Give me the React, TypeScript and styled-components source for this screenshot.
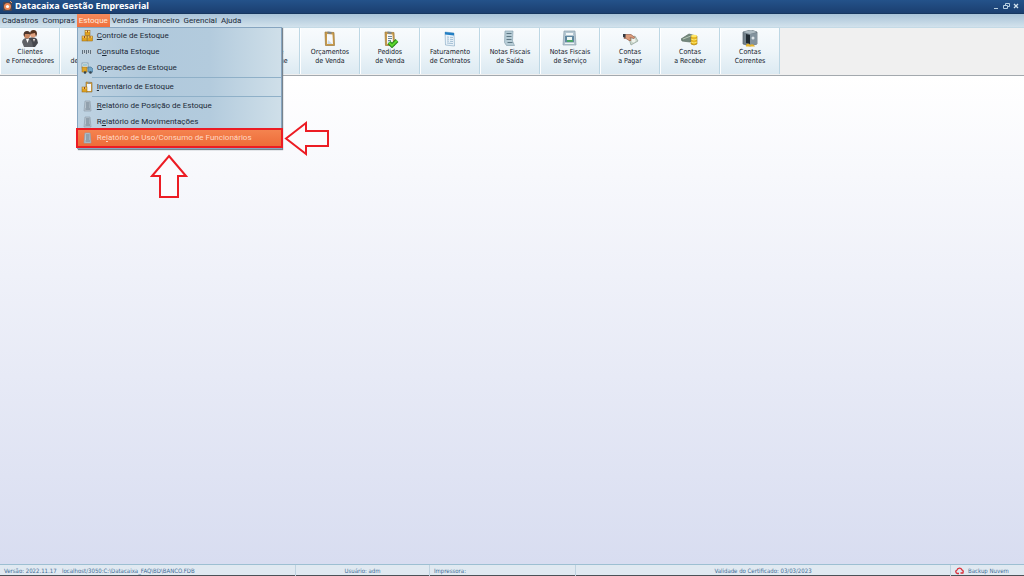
import React from "react";
import styled, { createGlobalStyle } from "styled-components";

const Global = createGlobalStyle`
  * { box-sizing: border-box; }
  html, body { margin: 0; padding: 0; }
  body { font-family: Roboto, "Noto Sans", sans-serif; color: #1c2a38; }
  button { font: inherit; color: inherit; border: 0; margin: 0; padding: 0; background: none; }
`;

const Window = styled.div`
  position: relative;
  display: flex;
  flex-direction: column;
  min-height: 100vh;
  background: linear-gradient(#ffffff 76px, #d7dcf0);
`;

const TitleBar = styled.header`
  display: flex;
  align-items: center;
  gap: 3px;
  height: 14px;
  padding: 0 4px 1px 3px;
  background: linear-gradient(#24528a, #1b3f70);
  border-bottom: 1px solid #16365f;
`;

const Title = styled.h1`
  flex: 1;
  margin: 0;
  font: bold 9px/12px "Noto Sans", sans-serif;
  color: #ffffff;
`;

const WindowButton = styled.button`
  display: flex;
  width: 7px;
  height: 8px;
`;

const MenuBar = styled.nav`
  display: flex;
  height: 13px;
  font-size: 8px;
  line-height: 12px;
  background: linear-gradient(#a9c3d8, #d2e2ec);
`;

const MenuSlot = styled.div`
  position: relative;
`;

const MenuButton = styled.button<{ $active?: boolean }>`
  display: block;
  height: 13px;
  padding: 0 2px;
  white-space: nowrap;
  color: ${(p) => (p.$active ? "#ffe9dd" : "#1c2a38")};
  background: ${(p) => (p.$active ? "linear-gradient(#f58a5c, #f0703c)" : "none")};
`;

const Dropdown = styled.div`
  position: absolute;
  z-index: 2;
  top: 13px;
  left: 0;
  width: 205px;
  padding-bottom: 2px;
  border: 1px solid #86a5c0;
  background: linear-gradient(90deg, #bfd3e2, #b0c9dc 35%, #b3cbdd 65%, #cfdfe9);
  box-shadow: 1px 1px 1px #77838d;
`;

const Entry = styled.button<{ $selected?: boolean }>`
  display: flex;
  align-items: center;
  gap: 4px;
  width: 100%;
  height: 16px;
  padding-left: 3px;
  white-space: nowrap;
  text-align: left;
  color: ${(p) => (p.$selected ? "#ffd9c4" : "#1c2a38")};
  background: ${(p) => (p.$selected ? "linear-gradient(#f4834f, #ee6c39)" : "none")};
`;

const Highlight = styled.div`
  margin: -2px;
  border: 2px solid #ec1c24;
`;

const Divider = styled.hr`
  height: 1px;
  margin: 1px 0 1px 14px;
  border: 0;
  background: #8fb0c8;
`;

const Toolbar = styled.div`
  display: flex;
  height: 49px;
  background: #f0f0f0;
  border-top: 1px solid #c4dae6;
  border-bottom: 1px solid #a3a9ae;
`;

const Tool = styled.button`
  display: flex;
  flex-direction: column;
  align-items: center;
  flex: 0 0 60px;
  height: 46px;
  padding-top: 2px;
  border-right: 1px solid #bdd7e4;
  border-left: 1px solid #ffffff;
  background: linear-gradient(#f8fbfd, #eef5f9 50%, #dceaf2);
  font: 7px/9px "DejaVu Sans Condensed", "DejaVu Sans", sans-serif;
  white-space: pre;
  text-align: center;
  color: #14202b;
`;

const ToolLabel = styled.span`
  display: block;
`;

const Workspace = styled.main`
  flex: 1;
`;

const StatusBar = styled.footer`
  display: grid;
  grid-template-columns: 62px 234px 134px 146px 1fr 73px;
  height: 12px;
  border-top: 1px solid #9dbfd2;
  border-bottom: 1px solid #4b5157;
  background: #e0e9f1;
  font: 6px/11px "DejaVu Sans Condensed", "DejaVu Sans", sans-serif;
  color: #3f6c96;
`;

const StatusCell = styled.div<{ $center?: boolean; $plain?: boolean }>`
  display: flex;
  align-items: center;
  gap: 4px;
  justify-content: ${(p) => (p.$center ? "center" : "flex-start")};
  padding-left: ${(p) => (p.$plain ? 0 : 4)}px;
  border-right: 1px solid #bfd3e0;
  white-space: nowrap;
  &:first-child, &:last-child { border-right: 0; }
`;

const Pointer = styled.svg<{ $x: number; $y: number }>`
  position: absolute;
  z-index: 3;
  left: ${(p) => p.$x}px;
  top: ${(p) => p.$y}px;
  fill: #fbfbfe;
  stroke: #ec1c24;
  stroke-width: 2;
`;

const Box = ({ x, y }: { x: number; y: number }) => (
  <g>
    <rect x={x} y={y} width="5" height="5" fill="#dfa21f" stroke="#946615" strokeWidth=".5" />
    <path d={`M${x + 0.5} ${y + 1}h4`} stroke="#ffe080" />
    <path d={`M${x + 2} ${y}h1v2h-1z`} fill="#a2491b" />
  </g>
);

const Clipboard = () => (
  <g>
    <path d="M4 2l9 .5.500 13H4.500z" fill="#c99a48" stroke="#9c7a3c" strokeWidth=".7" />
    <path d="M6 4l5.500.5.500 9.500H6z" fill="#f7f9fb" />
    <path d="M6.500 1.500l4 .5v2l-4-.5z" fill="#798590" />
    <path d="M7 10l4.500 4H6.500z" fill="#cbdbe7" />
  </g>
);

const Paper = () => (
  <g>
    <path d="M4 1h8l-.5 10 2 4.500H5.500l-2-3z" fill="#b6ccd6" stroke="#8ba5b1" strokeWidth=".7" />
    <path d="M5.500 3.500h5M5.500 6.500h5M5.500 9.500h5M6.500 12.500h5" stroke="#5c7683" strokeWidth="1" />
  </g>
);

const toolArt: Record<string, React.ReactNode> = {
  people: (
    <g>
      <path d="M8 8q5-2 8 1l1 4-3 4H8z" fill="#46484d" />
      <circle cx="12" cy="4.500" r="3" fill="#dfa17e" />
      <path d="M9 4q0-4 3.500-4T16 4l-1 3-1-4z" fill="#54331f" />
      <path d="M1 12q1-4 4.500-4t5.500 4l1 5H3z" fill="#5f6267" />
      <circle cx="6" cy="5.500" r="3" fill="#c98762" />
      <path d="M2.500 5q0-4 3.500-4t3.500 4L8 4H4L3.500 7z" fill="#4a352c" />
      <path d="M5 9l1.500 4L8 9z" fill="#fff" />
      <path d="M12 9l1 3 1-3z" fill="#f5e9e4" />
    </g>
  ),
  clipboard: <Clipboard />,
  order: (
    <g>
      <Clipboard />
      <path d="M7 6.500h4M7 8.500h4M7 10.500h3" stroke="#70899b" />
      <path d="M8 12.500l3 3 5-5" fill="none" stroke="#23801c" strokeWidth="4" />
      <path d="M8 12.500l3 3 5-5" fill="none" stroke="#5bd82e" strokeWidth="2" />
    </g>
  ),
  contract: (
    <g>
      <path d="M4 2l9 1 .5 13-9-1z" fill="#e9f2f9" stroke="#8fb0c8" strokeWidth=".7" />
      <path d="M4 2l9 1v2.500L4 4.500z" fill="#237fc4" />
      <path d="M6 7l2 .2M9 7.300l3 .2M6 9l2 .2M9 9.300l3 .2M6 11l2 .2M9 11.300l3 .2M6 13l6 .6" stroke="#a3bfd4" />
    </g>
  ),
  paper: <Paper />,
  service: (
    <g>
      <path d="M3 1h11l1 14H2z" fill="#b4c6d1" stroke="#8da0ad" strokeWidth=".7" />
      <path d="M5 3h7v2H5z" fill="#f3f7f8" />
      <rect x="4" y="6" width="9" height="6" fill="#5f869f" />
      <rect x="6" y="7" width="5" height="3" fill="#eef6f2" />
      <path d="M6 10h6v2H6z" fill="#4ca768" />
      <path d="M4 13.500h9" stroke="#eef3f5" />
    </g>
  ),
  pay: (
    <g>
      <path d="M8 9l6-3 3 5-7 4z" fill="#c9d6cb" stroke="#8fa196" strokeWidth=".7" />
      <circle cx="12.500" cy="10.500" r="2" fill="#eff3ec" />
      <path d="M4 4.500h6l4 3-1 1-4-1 1 3-2 0-3-2-2 0z" fill="#dc9b79" stroke="#8d5541" strokeWidth=".6" />
      <path d="M2 4l2.500 0 0 4-2.500-1z" fill="#343b43" />
    </g>
  ),
  receive: (
    <g>
      <path d="M0 9l8-5 7 2-6 6-8-1z" fill="#73887d" stroke="#5c6f63" strokeWidth=".7" />
      <path d="M2 9l8-3" stroke="#b5c6b5" />
      <path d="M10 6h6v8q-3 2-6 0z" fill="#e7b823" stroke="#9f750f" strokeWidth=".6" />
      <ellipse cx="13" cy="6" rx="3" ry="1.300" fill="#ffe768" />
      <path d="M10 9q3 2 6 0M10 12q3 2 6 0" fill="none" stroke="#fff080" strokeWidth=".8" />
    </g>
  ),
  safe: (
    <g>
      <path d="M2 2l8-2 6 2v12l-7 2-7-2z" fill="#73818b" stroke="#56636d" strokeWidth=".7" />
      <path d="M2 2l8-2 6 2-7 2z" fill="#aebbc2" />
      <path d="M5 4l4 1v9l-4-1z" fill="#202a32" />
      <path d="M9 4l7-1v11l-7 2z" fill="#82929d" />
      <circle cx="12" cy="8" r="1.500" fill="#dbe3e7" />
      <path d="M5 15q2-3 4 0 3-2 5 1.500H5z" fill="#e8b52b" />
    </g>
  ),
};

const menuArt: Record<string, React.ReactNode> = {
  boxes: <g><Box x={4} y={0.5} /><Box x={1} y={6} /><Box x={6.500} y={6} /></g>,
  barcode: (
    <g>
      <rect x="1" y="4" width="10" height="4" fill="#c3cfd8" />
      <path d="M1.500 4v4M3.500 4v3M5.500 4v4M7.500 4v3M9.500 4v4" stroke="#61707e" />
    </g>
  ),
  truck: (
    <g>
      <rect x="1" y="1" width="6" height="5" fill="#eef3f4" stroke="#6e8d9e" strokeWidth=".7" />
      <path d="M2 3h4" stroke="#53a1b7" />
      <path d="M7 5h3l2 2v3H7z" fill="#72a6c8" stroke="#416f8f" strokeWidth=".6" />
      <rect x="1" y="5" width="5" height="5" fill="#dda62b" stroke="#91671d" strokeWidth=".5" />
      <circle cx="4" cy="10.500" r="1.300" fill="#34434f" /><circle cx="9.500" cy="10.500" r="1.300" fill="#34434f" />
    </g>
  ),
  inventory: (
    <g>
      <path d="M5 1l6 .5v9.500H5z" fill="#d4a13f" stroke="#8c6c34" strokeWidth=".6" />
      <path d="M6 3h4v7H6z" fill="#f3f5f6" /><path d="M7 1h2v2H7z" fill="#8d918f" />
      <Box x={1} y={6} />
    </g>
  ),
  report: (
    <g>
      <path d="M4 1h5l1 10H3z" fill="#b9c5cf" stroke="#8fa1af" strokeWidth=".7" />
      <path d="M5 3h3.500M5 5h3.500M5 7h3.500M4.500 9H9" stroke="#6a7d8b" />
    </g>
  ),
};

type Item = { icon: string; parts: [string, string, string]; selected?: boolean; divided?: boolean };
const entries: Item[] = [
  { icon: "boxes", parts: ["", "C", "ontrole de Estoque"] },
  { icon: "barcode", parts: ["C", "o", "nsulta Estoque"] },
  { icon: "truck", parts: ["O", "p", "erações de Estoque"] },
  { icon: "inventory", parts: ["", "I", "nventário de Estoque"], divided: true },
  { icon: "report", parts: ["", "R", "elatório de Posição de Estoque"], divided: true },
  { icon: "report", parts: ["R", "e", "latório de Movimentações"] },
  { icon: "report", parts: ["Re", "l", "atório de Uso/Consumo de Funcionários"], selected: true },
];

const tools: { icon?: string; label?: string }[] = [
  { icon: "people", label: "Clientes\ne Fornecedores" },
  { icon: "order", label: "\nde Produção" },
  {},
  {},
  { icon: "paper", label: "Controle\nde Estoque" },
  { icon: "clipboard", label: "Orçamentos\nde Venda" },
  { icon: "order", label: "Pedidos\nde Venda" },
  { icon: "contract", label: "Faturamento\nde Contratos" },
  { icon: "paper", label: "Notas Fiscais\nde Saída" },
  { icon: "service", label: "Notas Fiscais\nde Serviço" },
  { icon: "pay", label: "Contas\na Pagar" },
  { icon: "receive", label: "Contas\na Receber" },
  { icon: "safe", label: "Contas\nCorrentes" },
];

const menus = ["Cadastros", "Compras", "Estoque", "Vendas", "Financeiro", "Gerencial", "Ajuda"];

const EntryRow = ({ item }: { item: Item }) => (
  <Entry $selected={item.selected}>
    <svg width="12" height="12" viewBox="0 0 12 12">{menuArt[item.icon]}</svg>
    <span>{item.parts[0]}<u>{item.parts[1]}</u>{item.parts[2]}</span>
  </Entry>
);

export default function App() {
  return (
    <Window>
      <Global />
      <TitleBar>
        <svg width="9" height="10" viewBox="0 0 9 10">
          <rect x="0" y="1" width="9" height="9" rx="1" fill="#4b4650" />
          <circle cx="4.500" cy="5.500" r="3.500" fill="#ee8755" />
          <circle cx="4.500" cy="5.500" r="1.600" fill="#fff" />
          <path d="M7 0l2 2" stroke="#f19b66" />
        </svg>
        <Title>Datacaixa Gestão Empresarial</Title>
        <WindowButton aria-label="Minimizar">
          <svg width="7" height="8"><path d="M1 6.500h4" stroke="#b8d0e2" strokeWidth="1" /></svg>
        </WindowButton>
        <WindowButton aria-label="Restaurar">
          <svg width="7" height="8" fill="none" stroke="#b8d0e2"><path d="M2.500 3V1.500h4v3H5M.5 3.500h4v3h-4z" /></svg>
        </WindowButton>
        <WindowButton aria-label="Fechar">
          <svg width="7" height="8"><path d="M1 2l4 4M5 2L1 6" stroke="#d3e3ee" strokeWidth="1.300" /></svg>
        </WindowButton>
      </TitleBar>
      <MenuBar>
        {menus.map((name) => (
          <MenuSlot key={name}>
            <MenuButton $active={name === "Estoque"}>{name}</MenuButton>
            {name === "Estoque" && (
              <Dropdown>
                {entries.map((item) => (
                  <React.Fragment key={item.parts.join("")}>
                    {item.divided && <Divider />}
                    {item.selected ? <Highlight><EntryRow item={item} /></Highlight> : <EntryRow item={item} />}
                  </React.Fragment>
                ))}
              </Dropdown>
            )}
          </MenuSlot>
        ))}
      </MenuBar>
      <Toolbar>
        {tools.map((t, i) => (
          <Tool key={i}>
            {t.icon && <svg width="18" height="18" viewBox="0 0 18 18">{toolArt[t.icon]}</svg>}
            {t.label && <ToolLabel>{t.label}</ToolLabel>}
          </Tool>
        ))}
      </Toolbar>
      <Workspace />
      <StatusBar>
        <StatusCell>Versão: 2022.11.17</StatusCell>
        <StatusCell $plain>localhost/3050:C:\Datacaixa_FAQ\BD\BANCO.FDB</StatusCell>
        <StatusCell $center $plain>Usuário: adm</StatusCell>
        <StatusCell>Impressora:</StatusCell>
        <StatusCell $center $plain>Validade do Certificado: 03/03/2023</StatusCell>
        <StatusCell>
          <svg width="9" height="8" viewBox="0 0 9 8" fill="none" stroke="#d9303a" strokeWidth="1.300">
            <path d="M4 6.500H2.500A1.800 1.800 0 0 1 2 3a2.500 2.500 0 0 1 4.800-.2A1.900 1.900 0 0 1 8 5.500M5.500 6h3" />
          </svg>
          Backup Nuvem
        </StatusCell>
      </StatusBar>
      <Pointer $x={284} $y={120} width="46" height="37" viewBox="0 0 46 37">
        <path d="M2 18.500L22 3v8h22v15H22v8z" />
      </Pointer>
      <Pointer $x={150} $y={154} width="38" height="45" viewBox="0 0 38 45">
        <path d="M19 2L36 22h-8v21H10V22H2z" />
      </Pointer>
    </Window>
  );
}
